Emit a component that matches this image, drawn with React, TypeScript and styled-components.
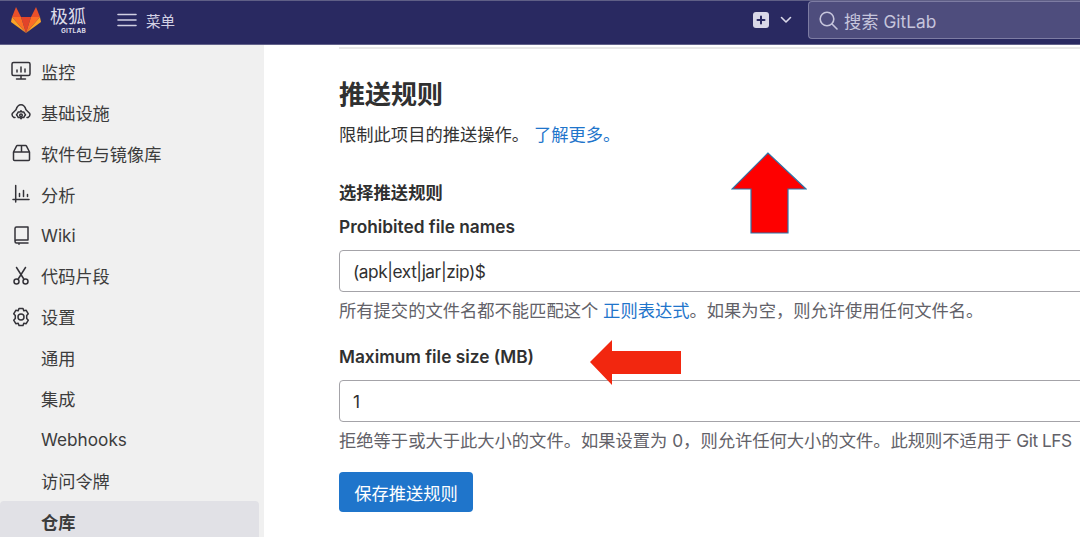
import styled, { createGlobalStyle } from "styled-components";
import { ReactNode } from "react";

const GlobalStyle = createGlobalStyle`
  html, body {
    margin: 0;
    padding: 0;
    height: 100%;
    overflow: hidden;
    background: #fff;
    font-family: Inter, "Noto Sans CJK SC", sans-serif;
    color: #303030;
  }
`;

const Icon = ({ children }: { children: ReactNode }) => (
  <NavSvg viewBox="0 0 20 20" fill="none" stroke="#333238" strokeWidth="1.5" strokeLinecap="round" strokeLinejoin="round">
    {children}
  </NavSvg>
);

const navItems: { label: string; icon?: ReactNode; active?: boolean }[] = [
  {
    label: "监控",
    icon: (
      <Icon>
        <rect x="1" y="1.5" width="18" height="13" rx="1.5" />
        <path d="M6 11V9M10 11V6M14 11V8M10 14.5V18M5.5 18h9" />
      </Icon>
    ),
  },
  {
    label: "基础设施",
    icon: (
      <Icon>
        <path d="M4 15.5H3C1.4 14.5.8 12.5 1.5 11.2L5 7.8C6 4.5 8 2.8 10 2.8S14 4.500 15 7.8L18.5 11.2C19.2 12.5 18.6 14.5 17 15.5H16" />
        <path d="M10 8.800l1 1.300 1.700-.2.800 1.500 1 1.300-1 1.400-.8 1.500-1.700-.2-1 1.300-1-1.300-1.700.2-.8-1.500-1-1.400 1-1.300.8-1.500 1.700.2Z" />
        <circle cx="10" cy="13.300" r="1.300" />
      </Icon>
    ),
  },
  {
    label: "软件包与镜像库",
    icon: (
      <Icon>
        <path d="M2.5 9V16.5a1 1 0 0 0 1 1h14a1 1 0 0 0 1-1V9L15.5 3.200a1 1 0 0 0-.9-.6H6.400a1 1 0 0 0-.9.6L2.5 9ZM2.500 9h16M10.500 2.600V9" />
      </Icon>
    ),
  },
  {
    label: "分析",
    icon: (
      <Icon>
        <path d="M4.700 1.500V18M2 15.500h16M8.500 12.500v-3M12.500 12.500V6.500M16.500 12.500v-2" />
      </Icon>
    ),
  },
  {
    label: "Wiki",
    icon: (
      <Icon>
        <path d="M4 16V3.500A1.500 1.500 0 0 1 5.500 2H17V15H5.500A1.500 1.500 0 0 0 4 16.500 1.500 1.500 0 0 0 5.500 18H17M8 18v1.200" />
      </Icon>
    ),
  },
  {
    label: "代码片段",
    icon: (
      <Icon>
        <path d="M5.500 1.500 12.800 13M14.500 1.500 7.200 13" />
        <circle cx="5.500" cy="15.500" r="2.500" />
        <circle cx="14.500" cy="15.500" r="2.500" />
      </Icon>
    ),
  },
  {
    label: "设置",
    icon: (
      <Icon>
        <path d="M8 1.500h4l.8 2.300 2.400-.5 2.100 3.500-1.600 1.800v2.800l1.600 1.800-2.100 3.500-2.400-.5-.8 2.300H8l-.8-2.300-2.400.5-2.100-3.500 1.600-1.800V8.600L2.700 6.800l2.100-3.500 2.400.5L8 1.500Z" />
        <circle cx="10" cy="10" r="3" />
      </Icon>
    ),
  },
  { label: "通用" },
  { label: "集成" },
  { label: "Webhooks" },
  { label: "访问令牌" },
  { label: "仓库", active: true },
];

const App = () => (
  <>
    <GlobalStyle />
    <Page>
      <Header>
        <Brand>
          <svg width="30" height="27" viewBox="0 0 30 27">
            <path d="M5 1l5 10H1Z" fill="#e8502a" />
            <path d="M25 1l-5 10h9Z" fill="#e8502a" />
            <path d="M10 11h10l-5 16Z" fill="#e24329" />
            <path d="M1 11h9l5 16Z" fill="#fc6d26" />
            <path d="M29 11h-9l-5 16Z" fill="#fc6d26" />
            <path d="M1 11 0 16l15 11Z" fill="#fca326" />
            <path d="M29 11l1 5-15 11Z" fill="#fca326" />
          </svg>
          <BrandText>
            <BrandName>极狐</BrandName>
            <BrandSub>GITLAB</BrandSub>
          </BrandText>
        </Brand>
        <MenuButton>
          <svg width="20" height="14" viewBox="0 0 20 14" stroke="#d1d0e3" strokeWidth="1.6" strokeLinecap="round">
            <path d="M1 1.500h18M1 7h18M1 12.500h18" />
          </svg>
          <span>菜单</span>
        </MenuButton>
        <HeaderRight>
          <NewButton>
            <svg width="16" height="16" viewBox="0 0 16 16">
              <rect width="16" height="16" rx="3" fill="#d9d8e8" />
              <path d="M8 4.500v7M4.500 8h7" stroke="#292961" strokeWidth="2" strokeLinecap="round" />
            </svg>
            <svg width="12" height="8" viewBox="0 0 12 8" fill="none" stroke="#d9d8e8" strokeWidth="1.6" strokeLinecap="round" strokeLinejoin="round">
              <path d="M1.500 1.500 6 6l4.500-4.500" />
            </svg>
          </NewButton>
          <SearchBox>
            <svg width="19" height="19" viewBox="0 0 19 19" fill="none" stroke="#c6c5dc" strokeWidth="1.6" strokeLinecap="round">
              <circle cx="8" cy="8" r="6.800" />
              <path d="M13 13l5 5" />
            </svg>
            <span>搜索 GitLab</span>
          </SearchBox>
        </HeaderRight>
      </Header>
      <Body>
        <Sidebar>
          {navItems.map((item) => (
            <NavItem key={item.label} $active={item.active}>
              <NavIconSlot>{item.icon}</NavIconSlot>
              <span>{item.label}</span>
            </NavItem>
          ))}
        </Sidebar>
        <Main>
          <Rule />
          <Title>推送规则</Title>
          <Lead>
            限制此项目的推送操作。 <Link>了解更多。</Link>
          </Lead>
          <SectionLabel>选择推送规则</SectionLabel>
          <FieldLabel>Prohibited file names</FieldLabel>
          <Field>(apk|ext|jar|zip)$</Field>
          <Help>
            所有提交的文件名都不能匹配这个 <Link>正则表达式</Link>。如果为空，则允许使用任何文件名。
          </Help>
          <FieldLabel $top={22}>Maximum file size (MB)</FieldLabel>
          <Field>1</Field>
          <Help>
            拒绝等于或大于此大小的文件。如果设置为 0，则允许任何大小的文件。此规则不适用于 <Latin>Git LFS</Latin>
          </Help>
          <SaveButton>保存推送规则</SaveButton>
        </Main>
      </Body>
      <UpArrow width="76" height="84" viewBox="0 0 76 84">
        <path d="M37 1 1 37h19v44h37V37h18Z" fill="#fe0000" stroke="#2e75a8" strokeWidth="1.2" />
      </UpArrow>
      <LeftArrow width="92" height="46" viewBox="0 0 92 46">
        <path d="M0 23 22 1v11h69v23H22v11Z" fill="#f2270f" />
      </LeftArrow>
    </Page>
  </>
);

export default App;

const Page = styled.div`
  position: relative;
  width: 1080px;
  height: 537px;
  overflow: hidden;
`;

const Header = styled.header`
  height: 45px;
  box-sizing: border-box;
  display: flex;
  align-items: flex-start;
  background: #292961;
  border-top: 1px solid #5f5f86;
  border-bottom: 1px solid #62628a;
  color: #d9d8e8;
`;

const Brand = styled.div`
  display: flex;
  align-items: flex-start;
  gap: 9px;
  margin: 5px 0 0 11px;
`;

const BrandText = styled.div`
  display: flex;
  flex-direction: column;
  align-items: flex-end;
  color: #dcdbe8;
`;

const BrandName = styled.div`
  font-size: 18px;
  line-height: 21px;
`;

const BrandSub = styled.div`
  font-size: 6.5px;
  line-height: 8px;
  font-weight: 700;
  letter-spacing: 0.2px;
`;

const MenuButton = styled.div`
  display: flex;
  align-items: center;
  gap: 9px;
  height: 38px;
  margin-left: 31px;
  font-size: 14.5px;
  color: #d1d0e3;
`;

const HeaderRight = styled.div`
  margin-left: auto;
  display: flex;
  align-items: center;
  gap: 16px;
  height: 38px;
`;

const NewButton = styled.div`
  display: flex;
  align-items: center;
  gap: 11px;
`;

const SearchBox = styled.div`
  width: 272px;
  height: 38px;
  box-sizing: border-box;
  display: flex;
  align-items: center;
  gap: 6px;
  padding-left: 10px;
  background: #4e4d7d;
  border: 1px solid #7d7ca3;
  border-right: none;
  border-radius: 4px 0 0 4px;
  font-size: 17.3px;
  color: #c6c5dc;
`;

const Body = styled.div`
  display: flex;
  height: 492px;
`;

const Sidebar = styled.nav`
  width: 264px;
  flex: none;
  box-sizing: border-box;
  padding-top: 6px;
  background: #f0f0f0;
`;

const NavItem = styled.div<{ $active?: boolean }>`
  width: 259px;
  height: 40.9px;
  box-sizing: border-box;
  display: flex;
  align-items: center;
  gap: 10px;
  padding-left: 11px;
  font-size: 17.2px;
  color: #3c3c3c;
  border-radius: 4px;
  background: ${(p) => (p.$active ? "#e1e1e6" : "transparent")};
  font-weight: ${(p) => (p.$active ? 600 : 400)};
`;

const NavIconSlot = styled.span`
  width: 20px;
  height: 20px;
  flex: none;
`;

const NavSvg = styled.svg`
  display: block;
  width: 20px;
  height: 20px;
`;

const Main = styled.main`
  flex: 1;
  min-width: 0;
  padding-left: 75px;
`;

const Rule = styled.div`
  height: 2px;
  margin-top: 2px;
  background: #e8e8e8;
`;

const Title = styled.h1`
  margin: 29px 0 0;
  font-size: 26px;
  line-height: 34px;
  font-weight: 600;
  color: #303030;
`;

const Lead = styled.p`
  margin: 11px 0 0;
  font-size: 17.3px;
  line-height: 24px;
  color: #333;
`;

const Link = styled.a`
  color: #1f75cb;
`;

const SectionLabel = styled.div`
  margin-top: 34px;
  font-size: 17.3px;
  line-height: 24px;
  font-weight: 600;
`;

const FieldLabel = styled.div<{ $top?: number }>`
  margin-top: ${(p) => p.$top ?? 10}px;
  font-size: 17.3px;
  line-height: 24px;
  font-weight: 600;
  color: #303030;
`;

const Field = styled.div`
  height: 42px;
  margin-top: 11px;
  margin-right: -8px;
  box-sizing: border-box;
  display: flex;
  align-items: center;
  padding-left: 13px;
  border: 1px solid #a4a3a8;
  border-radius: 4px;
  font-size: 17.3px;
  letter-spacing: -0.45px;
  color: #303030;
`;

const Help = styled.p`
  margin: 7px 0 0;
  font-size: 17.3px;
  line-height: 24px;
  color: #626168;
  white-space: nowrap;
`;

const Latin = styled.span`
  letter-spacing: -0.5px;
`;

const SaveButton = styled.button`
  display: block;
  width: 134px;
  height: 40px;
  margin-top: 19px;
  padding: 0;
  border: none;
  border-radius: 4px;
  background: #1f75cb;
  color: #fff;
  font: inherit;
  font-size: 17.3px;
`;

const UpArrow = styled.svg`
  position: absolute;
  left: 731px;
  top: 152px;
`;

const LeftArrow = styled.svg`
  position: absolute;
  left: 590px;
  top: 339px;
`;
